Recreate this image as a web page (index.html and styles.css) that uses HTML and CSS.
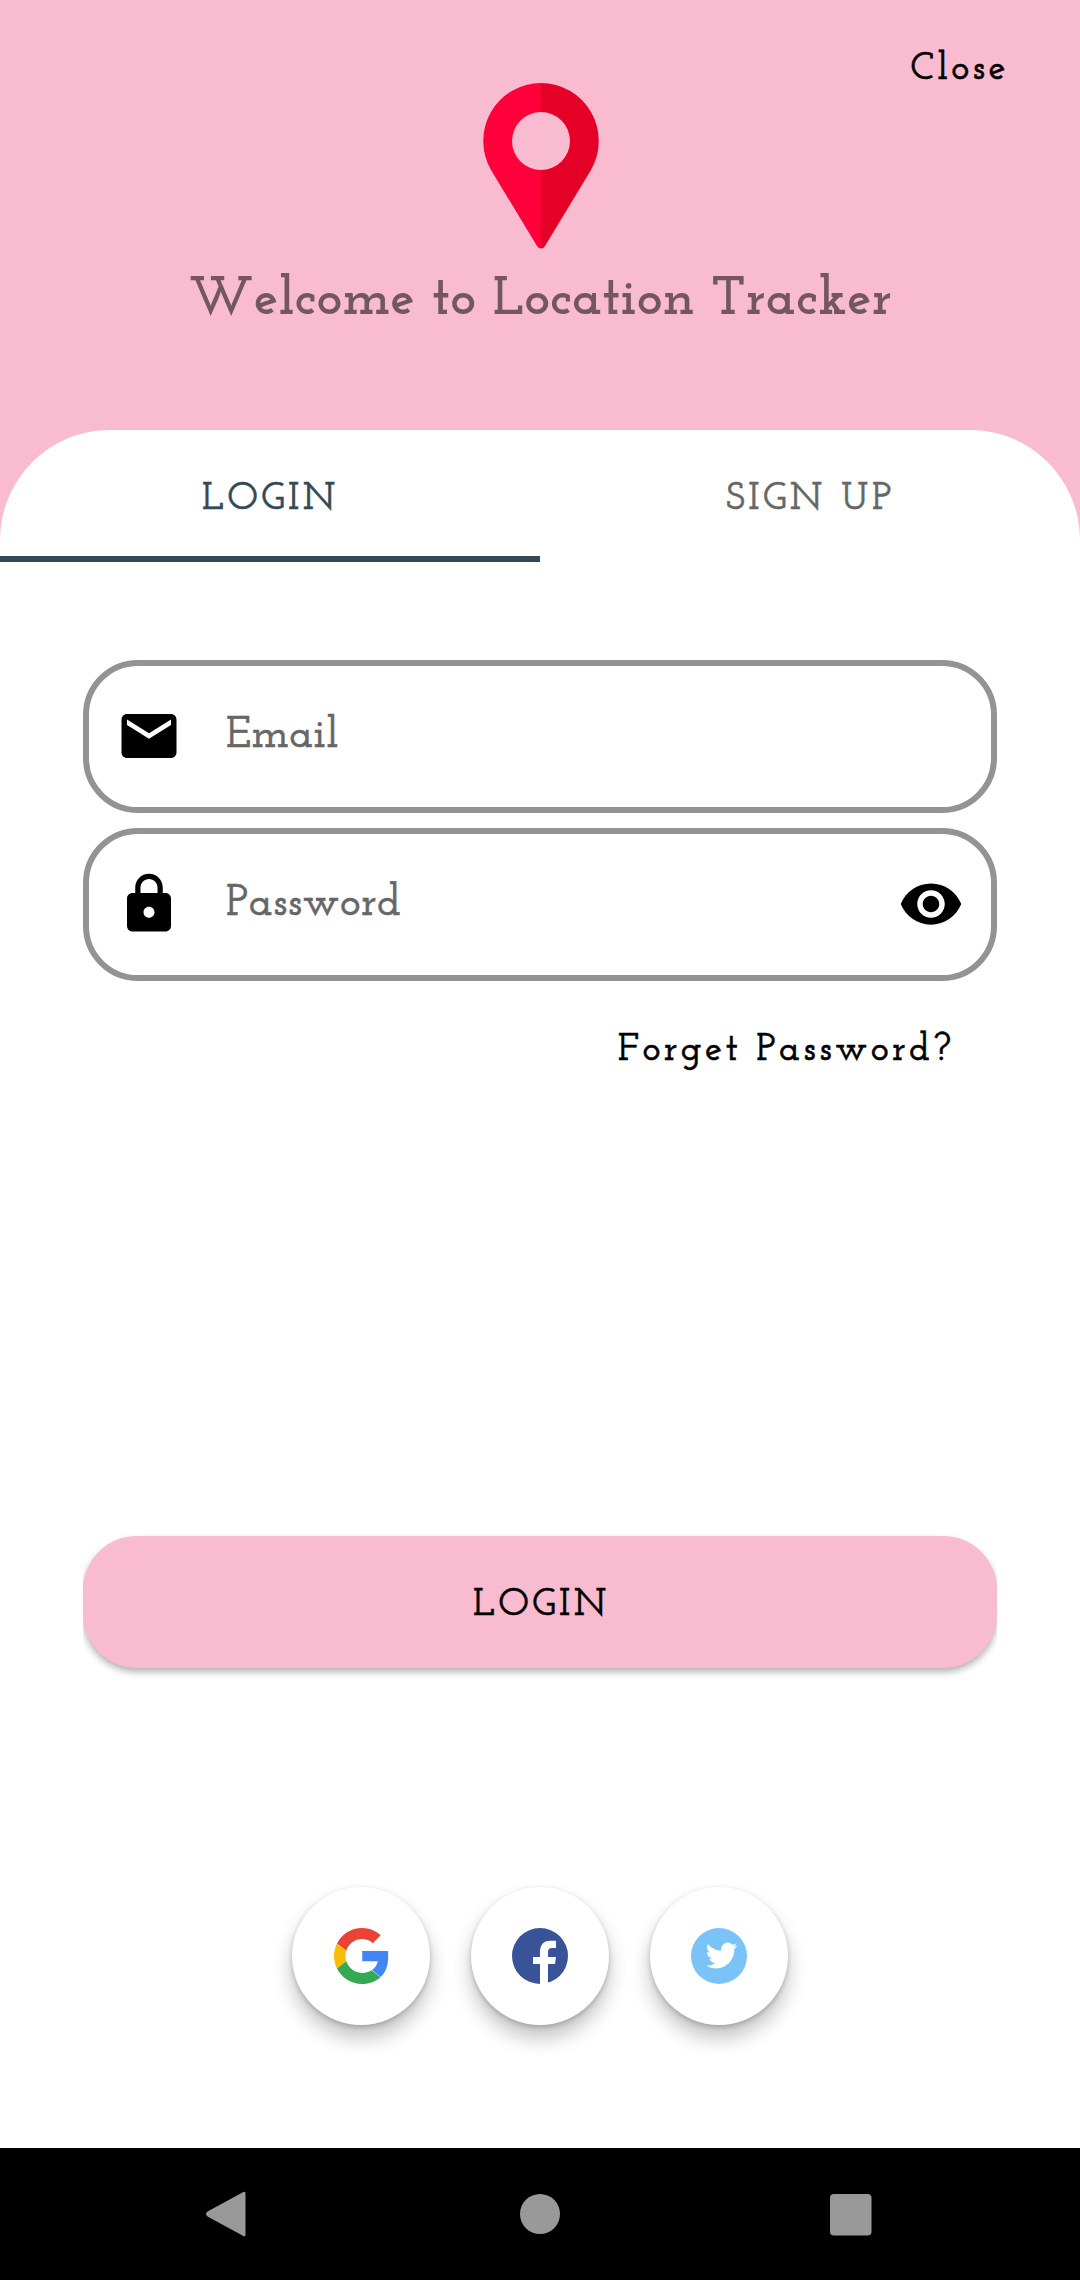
FILE: index.html
```html
<!DOCTYPE html>
<html lang="en">
<head>
<meta charset="utf-8">
<title>Location Tracker</title>
<link rel="stylesheet" href="styles.css">
</head>
<body>
<div class="screen">
  <header class="header">
    <a class="close"><span class="text">Close</span></a>
    <svg class="pin" viewBox="0 0 116 166">
      <path fill="#ff003a" d="M58 0A58 58 0 0 0 8 87L54 163Q55.500 165.500 58 165.500V87A29 29 0 0 1 58 29Z"/>
      <path fill="#e50027" d="M58 0A58 58 0 0 1 108 87L62 163Q60.500 165.500 58 165.500V87A29 29 0 0 0 58 29Z"/>
    </svg>
    <h1 class="title">Welcome to Location Tracker</h1>
  </header>
  <main class="panel">
    <nav class="tabs">
      <a class="tab active">LOGIN</a>
      <a class="tab signup">SIGN UP</a>
    </nav>
    <form class="form">
      <div class="field">
        <svg class="icon" viewBox="0 0 24 24"><path d="M20 4H4c-1.100 0-1.990.9-1.990 2L2 18c0 1.100.9 2 2 2h16c1.100 0 2-.9 2-2V6c0-1.100-.9-2-2-2zm0 4l-8 5-8-5V6l8 5 8-5v2z"/></svg>
        <span class="label email">Email</span>
      </div>
      <div class="field">
        <svg class="icon" viewBox="0 0 24 24"><path d="M18 8h-1V6c0-2.760-2.240-5-5-5S7 3.240 7 6v2H6c-1.100 0-2 .9-2 2v10c0 1.100.9 2 2 2h12c1.100 0 2-.9 2-2V10c0-1.100-.9-2-2-2zm-6 9c-1.100 0-2-.9-2-2s.9-2 2-2 2 .9 2 2-.9 2-2 2zm3.100-9H8.900V6c0-1.710 1.390-3.100 3.100-3.100s3.100 1.390 3.100 3.100v2z"/></svg>
        <span class="label password">Password</span>
        <svg class="icon" viewBox="0 0 24 24"><path d="M12 4.500C7 4.500 2.730 7.610 1 12c1.730 4.390 6 7.500 11 7.500s9.270-3.110 11-7.500c-1.730-4.390-6-7.500-11-7.500zM12 17c-2.760 0-5-2.240-5-5s2.240-5 5-5 5 2.240 5 5-2.240 5-5 5zm0-8c-1.660 0-3 1.340-3 3s1.340 3 3 3 3-1.340 3-3-1.340-3-3-3z"/></svg>
      </div>
      <a class="forgot">Forget Password?</a>
      <button class="submit" type="button">LOGIN</button>
    </form>
    <div class="social">
      <a class="round"><svg class="brand google" viewBox="0 0 48 48">
        <path fill="#ea4335" d="M24 9.500c3.540 0 6.710 1.220 9.210 3.600l6.850-6.850C35.900 2.380 30.470 0 24 0 14.620 0 6.510 5.380 2.560 13.220l7.980 6.190C12.430 13.720 17.740 9.500 24 9.500z"/>
        <path fill="#4285f4" d="M46.400 19.700H24.200v8.800H37.500c-.5 3.100-2.300 5.600-4.900 7.400l7.300 6.200c4.600-4.200 6.500-10.300 6.500-17.500z"/>
        <path fill="#fbbc05" d="M10.530 28.590c-.48-1.450-.76-2.990-.76-4.590s.27-3.140.76-4.590l-7.980-6.190C.92 16.460 0 20.120 0 24s.92 7.540 2.560 10.780l7.970-6.190z"/>
        <path fill="#34a853" d="M24 48c6.480 0 11.930-2.130 15.890-5.810l-7.730-6c-2.150 1.450-4.920 2.300-8.160 2.300-6.260 0-11.570-4.220-13.470-9.910l-7.980 6.190C6.510 42.620 14.620 48 24 48z"/>
      </svg></a>
      <a class="round"><svg class="brand" viewBox="0 0 56 56">
        <circle cx="28" cy="28" r="28" fill="#385398"/>
        <path fill="#fff" d="M28 56V36h-7v-7h7v-5c0-7 3.500-11.300 10-11.300h6V20h-4c-3 0-4 1.500-4 4v5h8l-1 7h-7v20z"/>
      </svg></a>
      <a class="round"><svg class="brand" viewBox="0 0 56 56">
        <circle cx="28" cy="28" r="28" fill="#7ac3f8"/>
        <path fill="#fff" transform="translate(14.800 11.800) scale(1.320)" d="M23.950 4.570a10 10 0 0 1-2.820.77 4.960 4.960 0 0 0 2.160-2.720c-.95.550-2 .95-3.130 1.180a4.920 4.920 0 0 0-8.380 4.480C7.690 8.100 4.070 6.130 1.640 3.160a4.920 4.920 0 0 0 1.520 6.570 4.900 4.900 0 0 1-2.230-.61v.06a4.920 4.920 0 0 0 3.950 4.830 5 5 0 0 1-2.210.08 4.940 4.940 0 0 0 4.600 3.420A9.870 9.870 0 0 1 0 19.540a14 14 0 0 0 7.550 2.210c9.050 0 14-7.500 14-13.980l-.02-.64a9.940 9.940 0 0 0 2.420-2.560z"/>
      </svg></a>
    </div>
  </main>
  <footer class="navbar">
    <svg class="key" viewBox="0 0 48 48"><path d="M40.500 2.500C42.500 1 43.500 2 43.500 4V44C43.500 46.500 42.500 47 40.500 45.500L5.500 26.500Q2.500 24 5.500 21.500Z"/></svg>
    <svg class="key" viewBox="0 0 48 48"><circle cx="24" cy="24" r="20"/></svg>
    <svg class="key" viewBox="0 0 48 48"><rect x="3" y="4" width="41.500" height="41.500" rx="4"/></svg>
  </footer>
</div>
</body>
</html>
```
FILE: styles.css
```css
* { box-sizing: border-box; }
body { margin: 0; font-family: "Josefin Slab", "DejaVu Serif", serif; font-kerning: none; background: #fff; color: #000; }
.screen { width: 1080px; height: 2280px; display: flex; flex-direction: column; background: #f8bbd0; overflow: hidden; }
.header { height: 430px; display: flex; flex-direction: column; align-items: center; white-space: nowrap; }
.close { align-self: flex-end; height: 83px; padding: 48px 71px 0 0; line-height: 44px; font-size: 38.5px; font-weight: 600; letter-spacing: .086em; }
.pin { width: 116px; height: 166px; flex: none; margin-left: 1px; }
.title { margin: 22px 0 0 1px; font-size: 55px; line-height: 60px; font-weight: 700; letter-spacing: .05px; color: #725660; }
.panel { height: 1718px; display: flex; flex-direction: column; background: #fff; border-radius: 110px 110px 0 0; }
.tabs { height: 132px; display: flex; margin-bottom: 98px; }
.tab { flex: 1; display: flex; align-items: center; justify-content: center; font-size: 38.5px; font-weight: 600; letter-spacing: .0893em; color: #666; padding: 13px 0 0 1px; border-bottom: 6px solid transparent; }
.active { color: #344955; border-color: #344955; }
.close, .tab, .label, .forgot, .submit { -webkit-text-stroke: .5px currentColor; }
.form { padding: 0 83px; display: flex; flex-direction: column; }
.field { height: 153px; margin-bottom: 15px; border: 6px solid #939393; border-radius: 55px; display: flex; align-items: center; padding: 0 27px; }
.icon { width: 66px; height: 66px; flex: none; margin-bottom: 1px; }
.label { flex: 1; margin-left: 44px; font-size: 44px; font-weight: 600; letter-spacing: .4px; color: #666; line-height: 50px; padding-bottom: 2px; }
.forgot { align-self: flex-end; margin: 30px 43px 0 0; height: 50px; line-height: 50px; font-size: 38.5px; font-weight: 600; letter-spacing: .086em; white-space: nowrap; }
.submit { margin-top: 460px; height: 132px; padding: 6px 0 0 3px; border: 0; border-radius: 54px; background: #f8bbd0; font: inherit; font-size: 38.5px; font-weight: 600; letter-spacing: .0893em; color: #000; box-shadow: 0 4px 7px rgba(0,0,0,.3); clip-path: inset(-8px 0 -20px 0); }
.social { margin-top: 219px; display: flex; justify-content: center; gap: 41px; }
.round { width: 138px; height: 138px; border-radius: 50%; background: #fff; display: flex; align-items: center; justify-content: center; box-shadow: 0 13px 20px rgba(0,0,0,.24), 0 2px 5px rgba(0,0,0,.2); }
.brand { width: 56px; height: 56px; }
.google { margin-left: 1px; }
.navbar { height: 132px; background: #000; display: flex; align-items: center; justify-content: space-between; padding: 0 205px 0 202px; fill: #999; }
.key { width: 48px; height: 48px; }
.key:nth-child(2) { margin-left: 2px; }
```
